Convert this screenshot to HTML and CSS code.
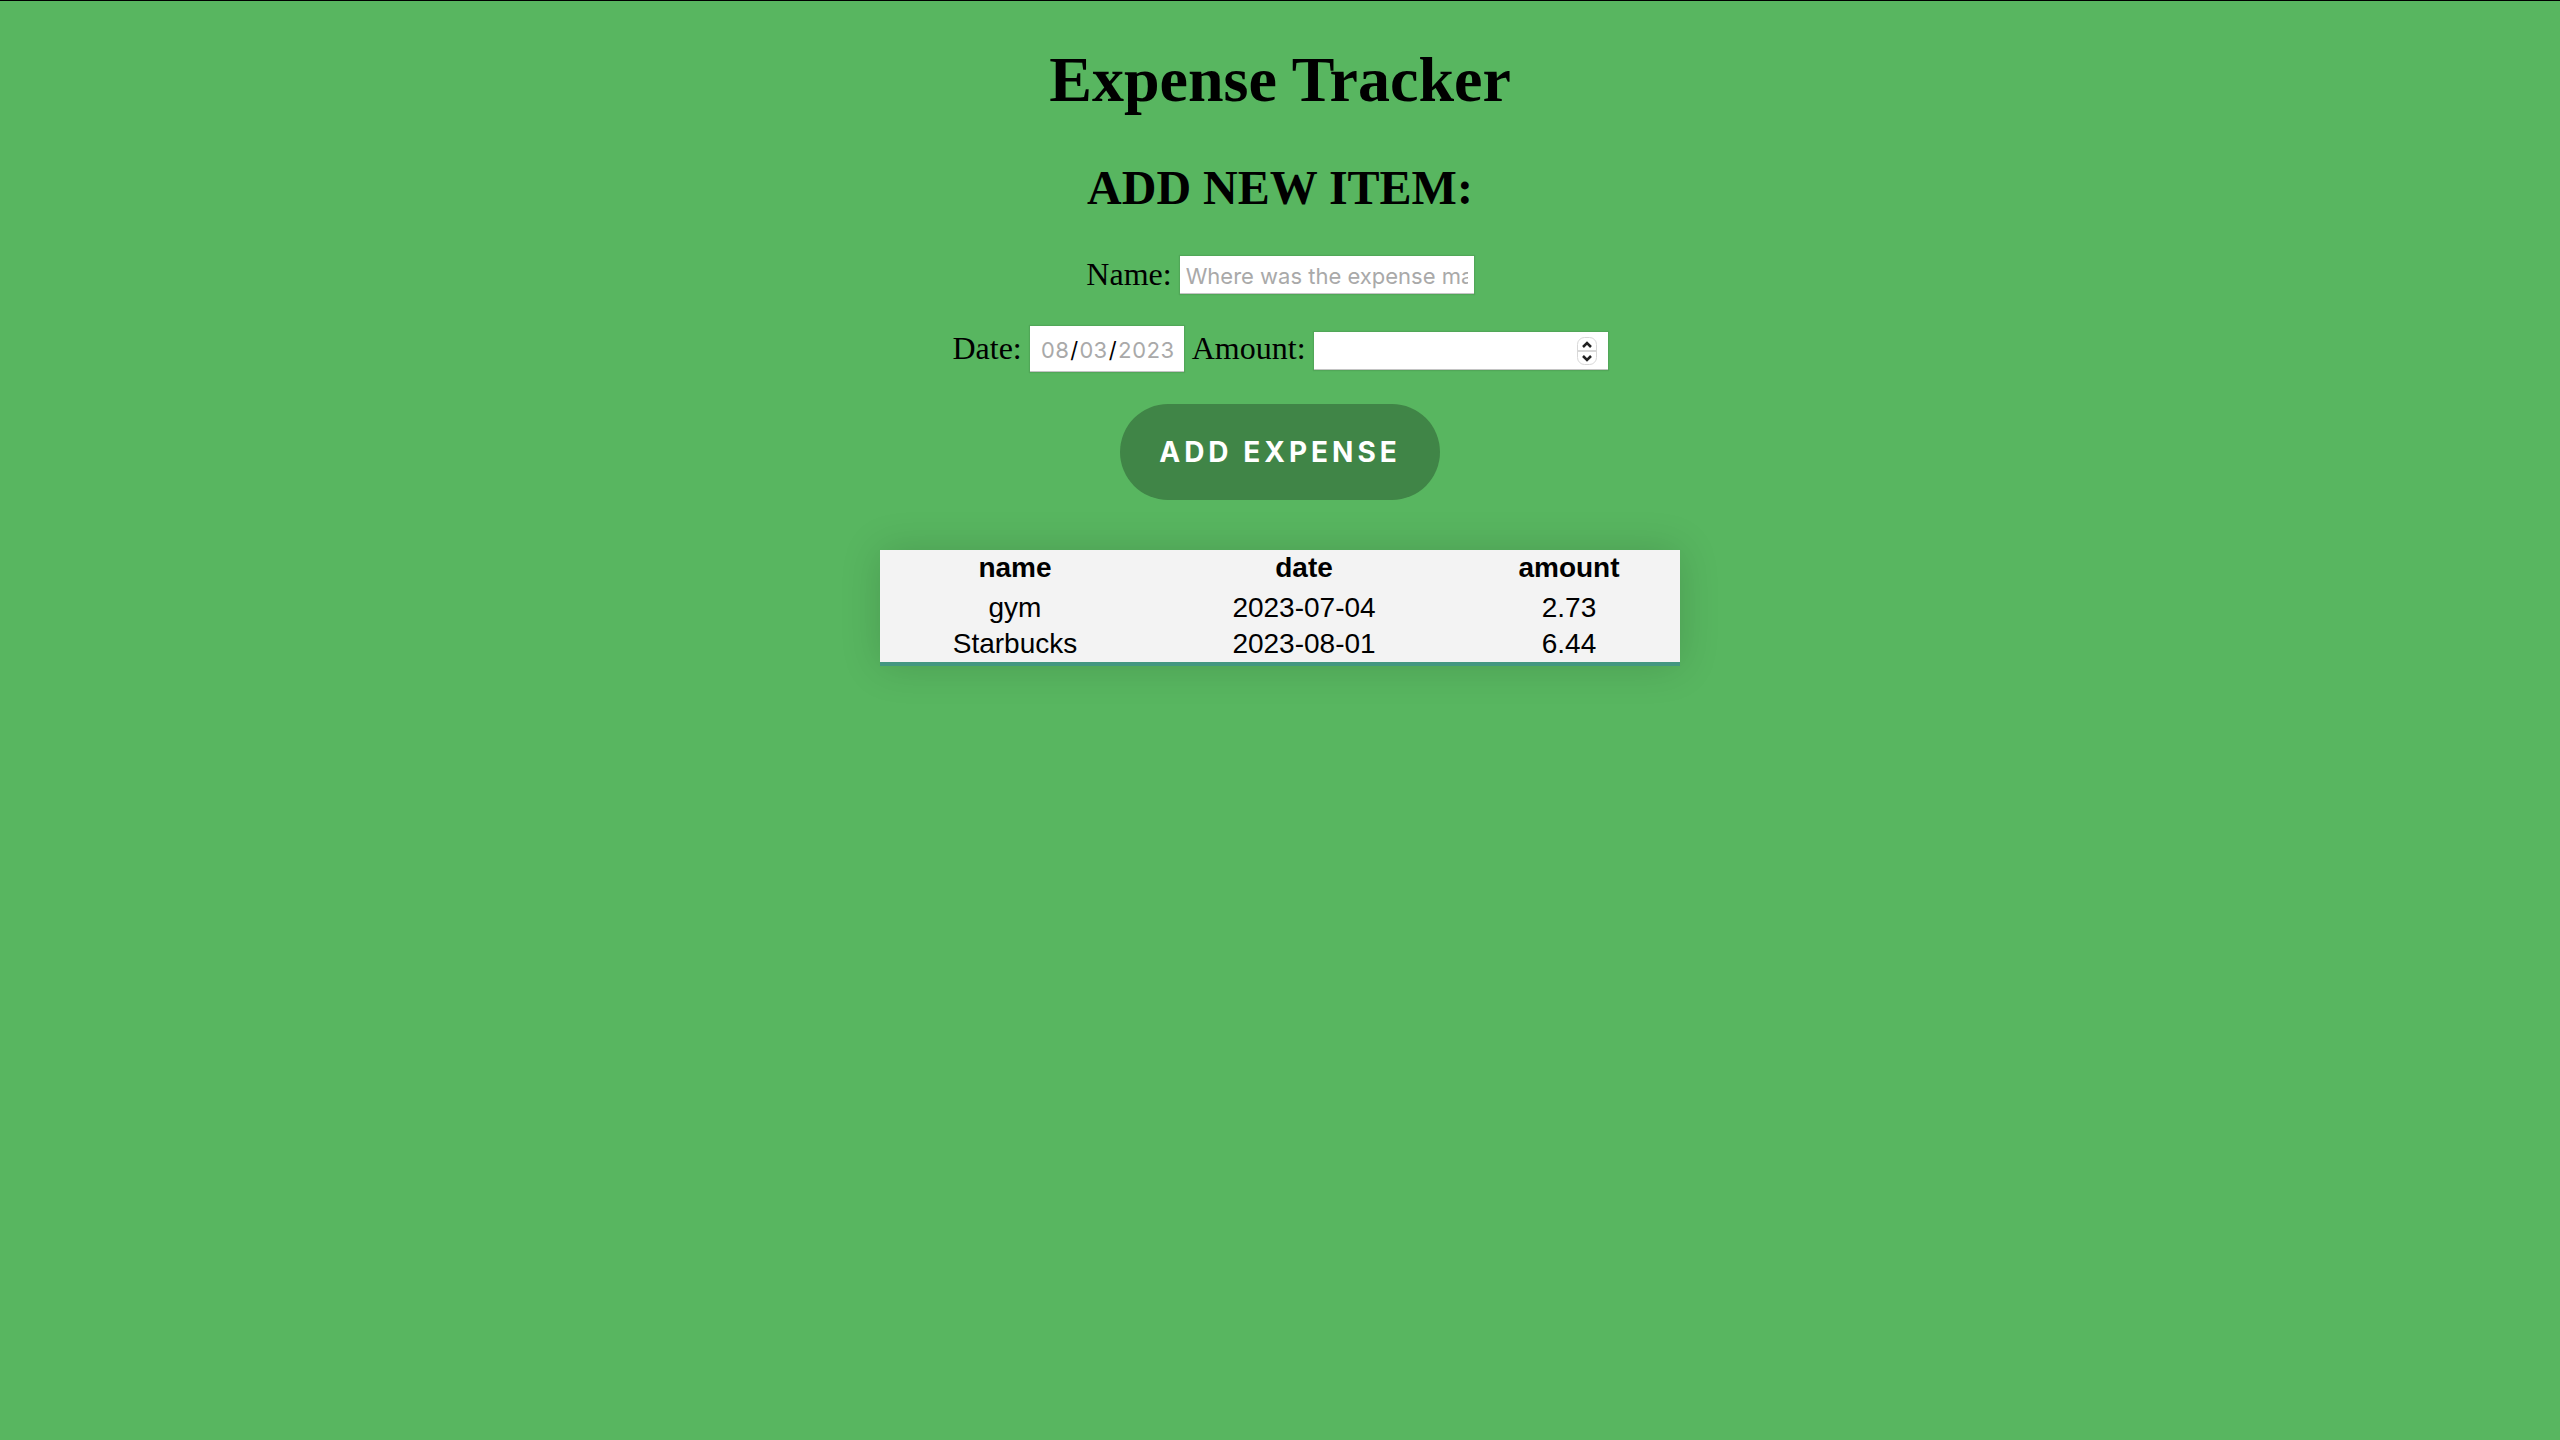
FILE: index.html
```html
<!DOCTYPE html>
<html lang="en">
<head>
  <meta charset="utf-8">
  <title>Expense Tracker</title>
  <link rel="stylesheet" href="styles.css">
</head>
<body>
  <main class="app">
    <h1 class="title">Expense Tracker</h1>
    <form class="expense-form">
      <h2 class="form-title">ADD NEW ITEM:</h2>
      <div class="form-row">
        <label for="name">Name:</label>
        <input class="field" type="text" id="name" placeholder="Where was the expense made?">
      </div>
      <div class="form-row form-row-tall">
        <label for="date">Date:</label>
        <input class="field field-date" type="date" id="date" value="2023-08-03">
        <label for="amount">Amount:</label>
        <input class="field field-number" type="number" id="amount" step="0.01">
      </div>
      <button class="submit" type="button">ADD EXPENSE</button>
    </form>
    <table class="expenses">
      <thead>
        <tr><th class="col-name" scope="col">name</th><th class="col-date" scope="col">date</th><th scope="col">amount</th></tr>
      </thead>
      <tbody>
        <tr><td>gym</td><td>2023-07-04</td><td>2.73</td></tr>
        <tr><td>Starbucks</td><td>2023-08-01</td><td>6.44</td></tr>
      </tbody>
    </table>
  </main>
</body>
</html>
```
FILE: styles.css
```css
* {
  box-sizing: border-box;
}

body {
  margin: 0;
  min-height: 100vh;
  border-top: 1px solid #000;
  background: #58b660;
  color: #000;
  font-family: "Liberation Serif", "Times New Roman", serif;
  font-size: 32px;
}

.app,
.expense-form {
  display: flex;
  flex-direction: column;
  align-items: center;
}

.title {
  margin: 42px 0 43px;
  font-size: 64px;
  line-height: 74px;
}

.form-title {
  margin: 0 0 40px;
  font-size: 48px;
  line-height: 56px;
}

.form-row {
  display: flex;
  align-items: center;
  gap: 8px;
  height: 38px;
  line-height: 36px;
}

.form-row label {
  padding-bottom: 2px;
}

.form-row-tall {
  height: 46px;
  margin: 32px 0;
}

.field {
  width: 294px;
  height: 38px;
  margin: 0;
  padding: 2px 6px 0;
  border: 0;
  border-radius: 0;
  background: #fff;
  box-shadow: inset 0 -1px #c4c4c4, 0 0 1px 1px rgba(0, 0, 0, 0.08);
  color: #000;
  font-family: Inter, "Liberation Sans", sans-serif;
  font-size: 22px;
  outline: 0;
}

.field::placeholder {
  color: #a9a9a9;
  opacity: 1;
}

.field-date {
  width: 154px;
  height: 46px;
  padding: 2px 10px 0;
  font-variant-numeric: tabular-nums;
}

.field-date::-webkit-calendar-picker-indicator {
  display: none;
}

.field-date::-webkit-datetime-edit-month-field,
.field-date::-webkit-datetime-edit-day-field,
.field-date::-webkit-datetime-edit-year-field {
  padding: 0 1px;
  color: #a9a9a9;
}

.field-number {
  margin-top: 4px;
  padding: 0 10px;
}

.field-number::-webkit-inner-spin-button {
  appearance: none;
  width: 22px;
  height: 30px;
  margin: 0;
  opacity: 1;
  background: url("data:image/svg+xml,%3Csvg xmlns='http://www.w3.org/2000/svg' width='22' height='30'%3E%3Crect x='1.5' y='1.5' width='19' height='27' rx='7' fill='white' stroke='%23d8d8d8'/%3E%3Cpath d='M2 15h18' stroke='%23d8d8d8' stroke-width='2'/%3E%3Cpath d='M7 11l4-4 4 4M7 20l4 4 4-4' fill='none' stroke='%23222' stroke-width='2.5'/%3E%3C/svg%3E") center no-repeat;
}

.submit {
  width: 320px;
  height: 96px;
  padding: 0;
  border: 0;
  border-radius: 48px;
  background: #408547;
  color: #fff;
  font-family: Inter, "Liberation Sans", sans-serif;
  font-size: 28px;
  font-weight: 700;
  letter-spacing: 4px;
}

.expenses {
  width: 800px;
  max-width: 100%;
  margin: 50px 0;
  border-collapse: collapse;
  border-bottom: 4px solid #439780;
  background: #f3f3f3;
  box-shadow: 0 0 40px rgba(0, 0, 0, 0.15);
  font-family: "Liberation Sans", Arial, sans-serif;
  font-size: 28px;
  line-height: 36px;
  text-align: center;
}

.expenses th,
.expenses td {
  padding: 0;
}

.expenses th {
  padding-bottom: 4px;
}

.expenses .col-name {
  width: 270px;
}

.expenses .col-date {
  width: 308px;
}
```
